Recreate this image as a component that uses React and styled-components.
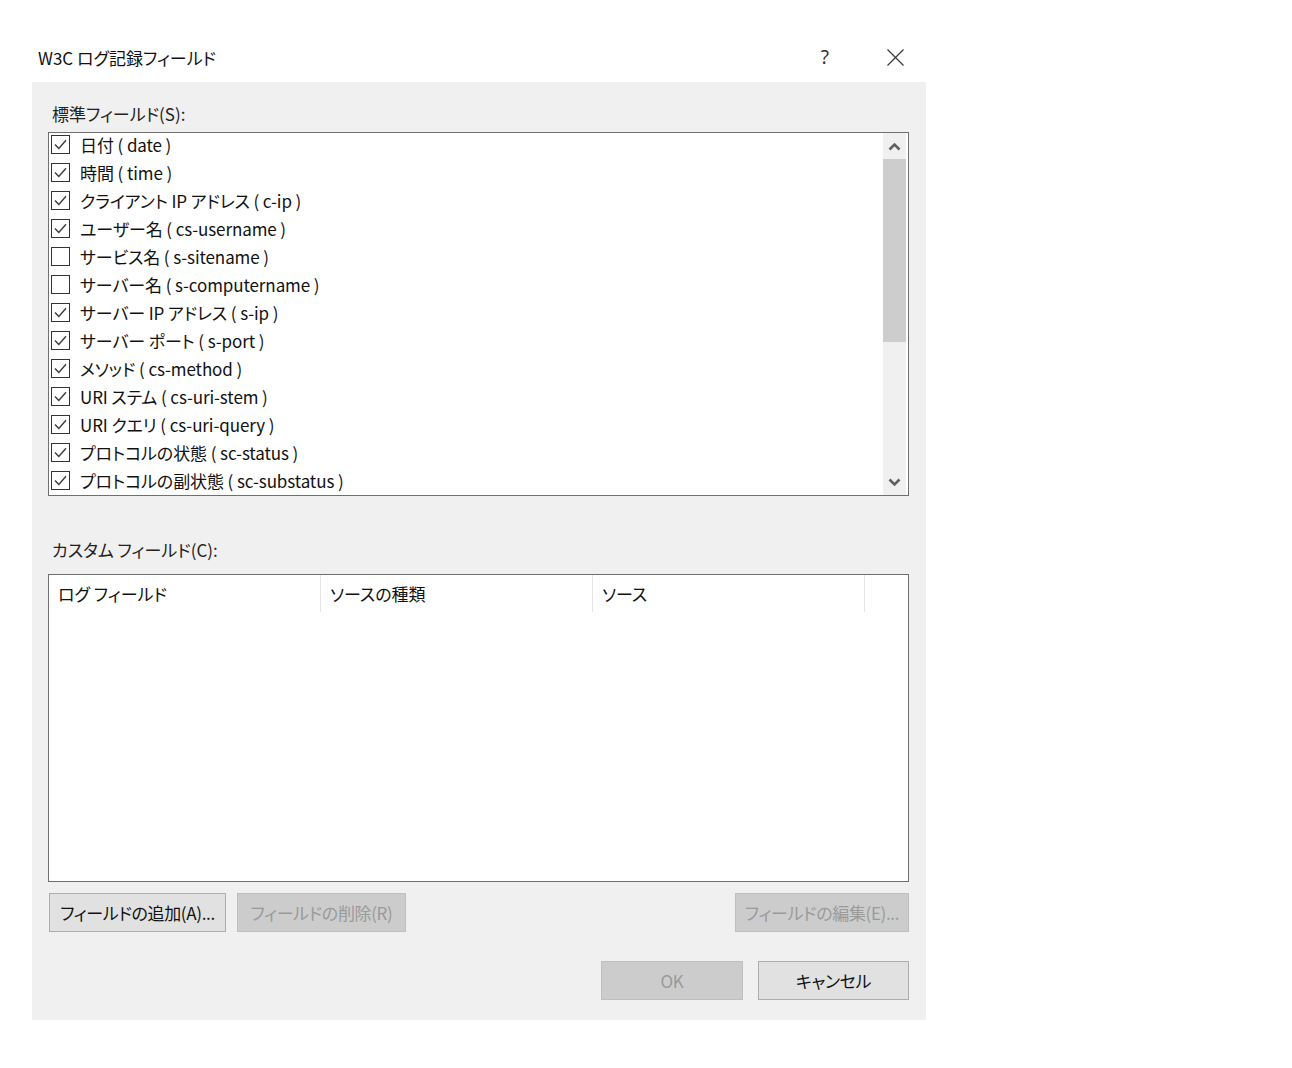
import React from "react";
import styled, { createGlobalStyle } from "styled-components";

const GlobalStyle = createGlobalStyle`
  body {
    margin: 0;
    background: #ffffff;
    font-family: "Noto Sans CJK JP", "Noto Sans", sans-serif;
    font-feature-settings: "palt";
    color: #000;
  }
`;

const standardFields = [
  { label: "日付", key: "date", checked: true },
  { label: "時間", key: "time", checked: true },
  { label: "クライアント IP アドレス", key: "c-ip", checked: true },
  { label: "ユーザー名", key: "cs-username", checked: true },
  { label: "サービス名", key: "s-sitename", checked: false },
  { label: "サーバー名", key: "s-computername", checked: false },
  { label: "サーバー IP アドレス", key: "s-ip", checked: true },
  { label: "サーバー ポート", key: "s-port", checked: true },
  { label: "メソッド", key: "cs-method", checked: true },
  { label: "URI ステム", key: "cs-uri-stem", checked: true },
  { label: "URI クエリ", key: "cs-uri-query", checked: true },
  { label: "プロトコルの状態", key: "sc-status", checked: true },
  { label: "プロトコルの副状態", key: "sc-substatus", checked: true },
];

const columns = ["ログ フィールド", "ソースの種類", "ソース"];

function CheckMark() {
  return (
    <svg width="15" height="15" viewBox="0 0 15 15">
      <path d="M2 7.5 L5.8 11.5 L13 3.2" fill="none" stroke="#3a3a3a" strokeWidth="1.4" />
    </svg>
  );
}

function Chevron({ up }) {
  return (
    <svg width="13" height="9" viewBox="0 0 13 9">
      <path
        d={up ? "M1.5 7.5 L6.5 2.5 L11.5 7.5" : "M1.5 1.5 L6.5 6.5 L11.5 1.5"}
        fill="none"
        stroke="#606060"
        strokeWidth="2.6"
      />
    </svg>
  );
}

export default function App() {
  return (
    <>
      <GlobalStyle />
      <Window>
        <TitleBar>
          <Title>W3C ログ記録フィールド</Title>
          <TitleButtons>
            <Help>?</Help>
            <CloseButton>
              <svg width="17" height="17" viewBox="0 0 17 17">
                <path d="M0.5 0.5 L16.5 16.5 M16.5 0.5 L0.5 16.5" stroke="#333" strokeWidth="1.1" />
              </svg>
            </CloseButton>
          </TitleButtons>
        </TitleBar>

        <Body>
          <Label>標準フィールド(S):</Label>
          <ListBox>
            <Rows>
              {standardFields.map((f) => (
                <Row key={f.key}>
                  <Box>{f.checked && <CheckMark />}</Box>
                  <RowText>
                    {f.label} ( {f.key} )
                  </RowText>
                </Row>
              ))}
            </Rows>
            <ScrollBar>
              <Arrow>
                <Chevron up />
              </Arrow>
              <Track>
                <Thumb />
              </Track>
              <Arrow>
                <Chevron />
              </Arrow>
            </ScrollBar>
          </ListBox>

          <Label $top={42}>カスタム フィールド(C):</Label>
          <ListView>
            <Header>
              {columns.map((c) => (
                <HeaderCell key={c}>{c}</HeaderCell>
              ))}
            </Header>
          </ListView>

          <ButtonRow $top={11}>
            <Button $w={177}>フィールドの追加(A)...</Button>
            <Button disabled $w={169}>フィールドの削除(R)</Button>
            <Spacer />
            <Button disabled $w={174}>フィールドの編集(E)...</Button>
          </ButtonRow>

          <ButtonRow $top={29}>
            <Spacer />
            <Button disabled $w={142}>OK</Button>
            <Button $w={151} $gap={4}>キャンセル</Button>
          </ButtonRow>
        </Body>
      </Window>
    </>
  );
}

const Window = styled.div`
  width: 894px;
  margin: 32px 0 0 32px;
`;

const TitleBar = styled.div`
  height: 50px;
  display: flex;
  align-items: center;
  justify-content: space-between;
  background: #fff;
`;

const Title = styled.div`
  padding-left: 6px;
  font-size: 17px;
  color: #111;
`;

const TitleButtons = styled.div`
  display: flex;
  align-items: center;
  gap: 58px;
  padding-right: 22px;
`;

const Help = styled.div`
  font-family: "Noto Sans", sans-serif;
  font-size: 19px;
  color: #333;
`;

const CloseButton = styled.div`
  display: flex;
  align-items: center;
`;

const Body = styled.div`
  background: #f0f0f0;
  padding: 20px 17px 20px 16px;
  display: flex;
  flex-direction: column;
`;

const Label = styled.div`
  margin-top: ${(p) => p.$top || 0}px;
  margin-left: 4px;
  font-size: 17px;
  line-height: 24px;
  color: #222;
`;

const ListBox = styled.div`
  margin-top: 6px;
  height: 362px;
  border: 1px solid #6f6f6f;
  background: #fff;
  display: flex;
  overflow: hidden;
`;

const Rows = styled.div`
  flex: 1;
  display: flex;
  flex-direction: column;
  margin-top: -3px;
`;

const Row = styled.div`
  height: 28px;
  flex: none;
  display: flex;
  align-items: center;
  padding-left: 2px;
`;

const Box = styled.div`
  width: 17px;
  height: 17px;
  border: 1px solid #333;
  background: #fff;
  display: flex;
  align-items: center;
  justify-content: center;
`;

const RowText = styled.span`
  margin-left: 10px;
  font-size: 17px;
  color: #111;
  white-space: pre;
  letter-spacing: -0.1px;
`;

const ScrollBar = styled.div`
  width: 23px;
  margin-right: 2px;
  background: #f0f0f0;
  display: flex;
  flex-direction: column;
`;

const Arrow = styled.div`
  height: 26px;
  display: flex;
  align-items: center;
  justify-content: center;
`;

const Track = styled.div`
  flex: 1;
`;

const Thumb = styled.div`
  height: 183px;
  background: #cdcdcd;
`;

const ListView = styled.div`
  margin-top: 12px;
  height: 306px;
  border: 1px solid #6f6f6f;
  background: #fff;
`;

const Header = styled.div`
  display: flex;
  height: 37px;
`;

const HeaderCell = styled.div`
  width: 272px;
  border-right: 1px solid #e5e5e5;
  padding-left: 9px;
  display: flex;
  align-items: center;
  font-size: 17px;
  color: #111;
  box-sizing: border-box;
`;

const ButtonRow = styled.div`
  margin-top: ${(p) => p.$top}px;
  display: flex;
  gap: 11px;
  padding-left: 1px;
`;

const Spacer = styled.div`
  flex: 1;
`;

const Button = styled.button`
  height: 39px;
  width: ${(p) => p.$w}px;
  margin-left: ${(p) => p.$gap || 0}px;
  padding: 0;
  background: ${(p) => (p.disabled ? "#cccccc" : "#e1e1e1")};
  border: 1px solid ${(p) => (p.disabled ? "#bfbfbf" : "#adadad")};
  color: ${(p) => (p.disabled ? "#9a9a9a" : "#111")};
  font-family: "Noto Sans CJK JP", "Noto Sans", sans-serif;
  font-feature-settings: "palt";
  font-size: 17px;
  letter-spacing: -0.35px;
  border-radius: 0;
  white-space: nowrap;
`;
